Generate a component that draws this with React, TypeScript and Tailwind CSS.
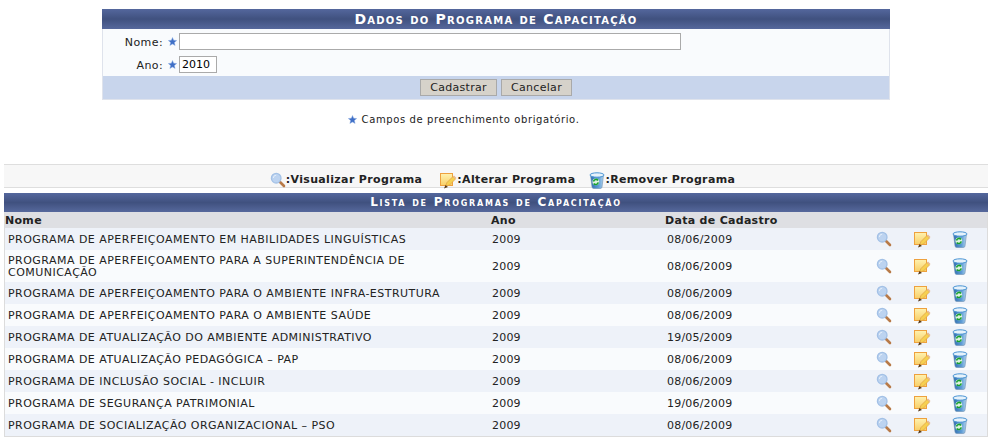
import React from 'react';

const programas = [
  { nome: 'PROGRAMA DE APERFEIÇOAMENTO EM HABILIDADES LINGUÍSTICAS', data: '08/06/2009' },
  { nome: 'PROGRAMA DE APERFEIÇOAMENTO PARA A SUPERINTENDÊNCIA DE COMUNICAÇÃO', data: '08/06/2009' },
  { nome: 'PROGRAMA DE APERFEIÇOAMENTO PARA O AMBIENTE INFRA-ESTRUTURA', data: '08/06/2009' },
  { nome: 'PROGRAMA DE APERFEIÇOAMENTO PARA O AMBIENTE SAÚDE', data: '08/06/2009' },
  { nome: 'PROGRAMA DE ATUALIZAÇÃO DO AMBIENTE ADMINISTRATIVO', data: '19/05/2009' },
  { nome: 'PROGRAMA DE ATUALIZAÇÃO PEDAGÓGICA – PAP', data: '08/06/2009' },
  { nome: 'PROGRAMA DE INCLUSÃO SOCIAL - INCLUIR', data: '08/06/2009' },
  { nome: 'PROGRAMA DE SEGURANÇA PATRIMONIAL', data: '19/06/2009' },
  { nome: 'PROGRAMA DE SOCIALIZAÇÃO ORGANIZACIONAL – PSO', data: '08/06/2009' },
];

const Star = () => (
  <svg width="9" height="9" viewBox="0 0 10 10" className="inline-block shrink-0">
    <path d="M5 .5 6.300 3.600 9.700 3.900 7.100 6.100 7.900 9.400 5 7.700 2.100 9.400 2.900 6.100.3 3.900 3.700 3.600Z" fill="#3f6fc6" stroke="#8fb0e6" strokeWidth=".5" />
  </svg>
);

const Lupa = () => (
  <svg width="16" height="16" viewBox="0 0 16 16" className="block shrink-0">
    <path d="M10 10 14 14" stroke="#b87a48" strokeWidth="2.600" strokeLinecap="round" />
    <circle cx="6.200" cy="6.200" r="4.800" fill="#bcd3f0" stroke="#a3c1e6" strokeWidth="1.300" />
    <path d="M3.400 6a2.800 2.800 0 0 1 2.800-2.800" stroke="#e4effb" strokeWidth="1" fill="none" />
  </svg>
);

const Nota = () => (
  <svg width="17" height="17" viewBox="0 0 17 17" className="block shrink-0">
    <defs>
      <linearGradient id="notaFundo" x1="0" y1="0" x2="0" y2="1">
        <stop offset="0" stopColor="#fff2b0" />
        <stop offset="1" stopColor="#f8cf68" />
      </linearGradient>
    </defs>
    <rect x=".5" y="1.500" width="12" height="12" fill="url(#notaFundo)" stroke="#eea13e" strokeWidth="1" />
    <path d="M5.500 14 7 10.500 13 4.500 15.500 7 9.500 13Z" fill="#f6d050" stroke="#e0a548" strokeWidth=".8" />
    <path d="M13 4.500 15.500 7 16.500 6 14 3.500Z" fill="#e8b890" />
    <path d="M4 16.500 5.500 13 8 15Z" fill="#5b3a17" />
  </svg>
);

const Lixeira = () => (
  <svg width="16" height="17" viewBox="0 0 16 17" className="block shrink-0">
    <defs>
      <linearGradient id="lixeiraCorpo" x1="0" y1="0" x2="1" y2="0">
        <stop offset="0" stopColor="#2f6fb0" />
        <stop offset=".6" stopColor="#5b9ad4" />
        <stop offset="1" stopColor="#b5d6ef" />
      </linearGradient>
    </defs>
    <path d="M1.500 3 3 15q.2 1.500 2 1.500h6q1.800 0 2-1.500L14.500 3Z" fill="url(#lixeiraCorpo)" stroke="#6d8fb0" strokeWidth=".6" />
    <ellipse cx="8" cy="3" rx="7" ry="2.200" fill="#e6f2fb" stroke="#4a94d4" strokeWidth="1" />
    <circle cx="6.800" cy="9.800" r="3.400" fill="#dff2df" />
    <path d="M4.500 9.500a2.500 2.500 0 0 1 4.500-1M9.200 10.300a2.500 2.500 0 0 1-4.500 1.200" fill="none" stroke="#17a02f" strokeWidth="1.600" />
  </svg>
);

const BarraTitulo = ({ children }: { children: React.ReactNode }) => (
  <div className="flex items-center justify-center bg-gradient-to-b from-[#54679d] via-[#40517f] to-[#56689c] font-bold text-white [font-variant:small-caps]">
    {children}
  </div>
);

export default function App() {
  return (
    <div className="w-[993px] h-[441px] overflow-hidden bg-white text-[11px] text-[#222] font-['DejaVu_Sans','Liberation_Sans',sans-serif]">
      <div className="pt-[9px] pl-[102px]">
        <div className="w-[788px] h-[91px] flex flex-col border-x border-b border-[#dfe3ec]">
          <div className="-mx-px">
            <BarraTitulo><span className="h-[20px] leading-[20px] text-[14px] tracking-[1.25px]">Dados do Programa de Capacitação</span></BarraTitulo>
          </div>
          <div className="flex-1 bg-[#f9fbfd] pt-[3px]">
            <div className="flex items-center h-[18px]">
              <label className="w-[60px] text-right pt-[4px] tracking-[.4px]">Nome:</label>
              <span className="w-[16px] pl-[5px] flex"><Star /></span>
              <input className="w-[502px] h-[17px] bg-white border border-[#aaa] outline-none" />
            </div>
            <div className="flex items-center h-[18px] mt-[5px]">
              <label className="w-[60px] text-right pt-[4px] tracking-[.4px]">Ano:</label>
              <span className="w-[16px] pl-[5px] flex"><Star /></span>
              <input defaultValue="2010" className="w-[38px] h-[17px] px-[2px] bg-white border border-[#aaa] outline-none text-[11px] text-black" />
            </div>
          </div>
          <div className="h-[23px] bg-[#c8d5ec] flex items-center justify-center gap-[4px]">
            <button className="w-[77px] h-[17px] leading-[15px] bg-[#d6d2ca] border border-[#a9a9a9] text-[11px] text-[#222] tracking-[.3px]">Cadastrar</button>
            <button className="w-[71px] h-[17px] leading-[15px] bg-[#d6d2ca] border border-[#a9a9a9] text-[11px] text-[#222] tracking-[.3px]">Cancelar</button>
          </div>
        </div>
      </div>

      <div className="mt-[12px] flex items-center justify-center gap-[5px] h-[14px] text-[10px] tracking-[.6px] pr-[66px]">
        <Star />
        <span>Campos de preenchimento obrigatório.</span>
      </div>

      <div className="mt-[38px] mx-[4px] w-[984px]">
        <div className="h-[24px] bg-[#f7f7f7] border-y border-[#dedede] flex items-center justify-center font-bold tracking-[.35px] pt-[8px] pl-[13px]">
          <span className="flex items-center"><Lupa />:Visualizar Programa</span>
          <span className="flex items-center ml-[18px]"><Nota />:Alterar Programa</span>
          <span className="flex items-center ml-[14px]"><Lixeira />:Remover Programa</span>
        </div>

        <div className="mt-[5px] border-x border-b border-[#dcdcdc]">
          <div className="-mx-px">
            <BarraTitulo><span className="h-[19px] leading-[19px] text-[12px] tracking-[1.75px]">Lista de Programas de Capacitação</span></BarraTitulo>
          </div>
          <table className="w-full table-fixed border-collapse">
            <colgroup>
              <col className="w-[486px]" />
              <col className="w-[174px]" />
              <col className="w-[204px]" />
              <col className="w-[39px]" />
              <col className="w-[38px]" />
              <col />
            </colgroup>
            <thead>
              <tr className="h-[16px] bg-[#dedfe3] text-left tracking-[.3px]">
                <th className="pt-[1px] font-bold leading-[15px]">Nome</th>
                <th className="pt-[1px] font-bold leading-[15px]">Ano</th>
                <th className="pt-[1px] font-bold leading-[15px]" colSpan={4}>Data de Cadastro</th>
              </tr>
            </thead>
            <tbody>
              {programas.map((p, i) => (
                <tr key={p.nome} className={i % 2 === 0 ? 'bg-[#eef2f9]' : 'bg-[#f9fbfd]'}>
                  <td className="pl-[3px] pt-[5px] pb-[3px] pr-[40px] leading-[12px] h-[22px] tracking-[.47px]">{p.nome}</td>
                  <td className="pl-[1px] pt-[2px] tracking-[.2px]">2009</td>
                  <td className="pl-[2px] pt-[2px] tracking-[.2px]">{p.data}</td>
                  <td><div className="flex justify-center pr-[10px]"><Lupa /></div></td>
                  <td><div className="flex justify-center pr-[10px]"><Nota /></div></td>
                  <td><div className="flex justify-center pr-[13px]"><Lixeira /></div></td>
                </tr>
              ))}
            </tbody>
          </table>
        </div>
      </div>
    </div>
  );
}
